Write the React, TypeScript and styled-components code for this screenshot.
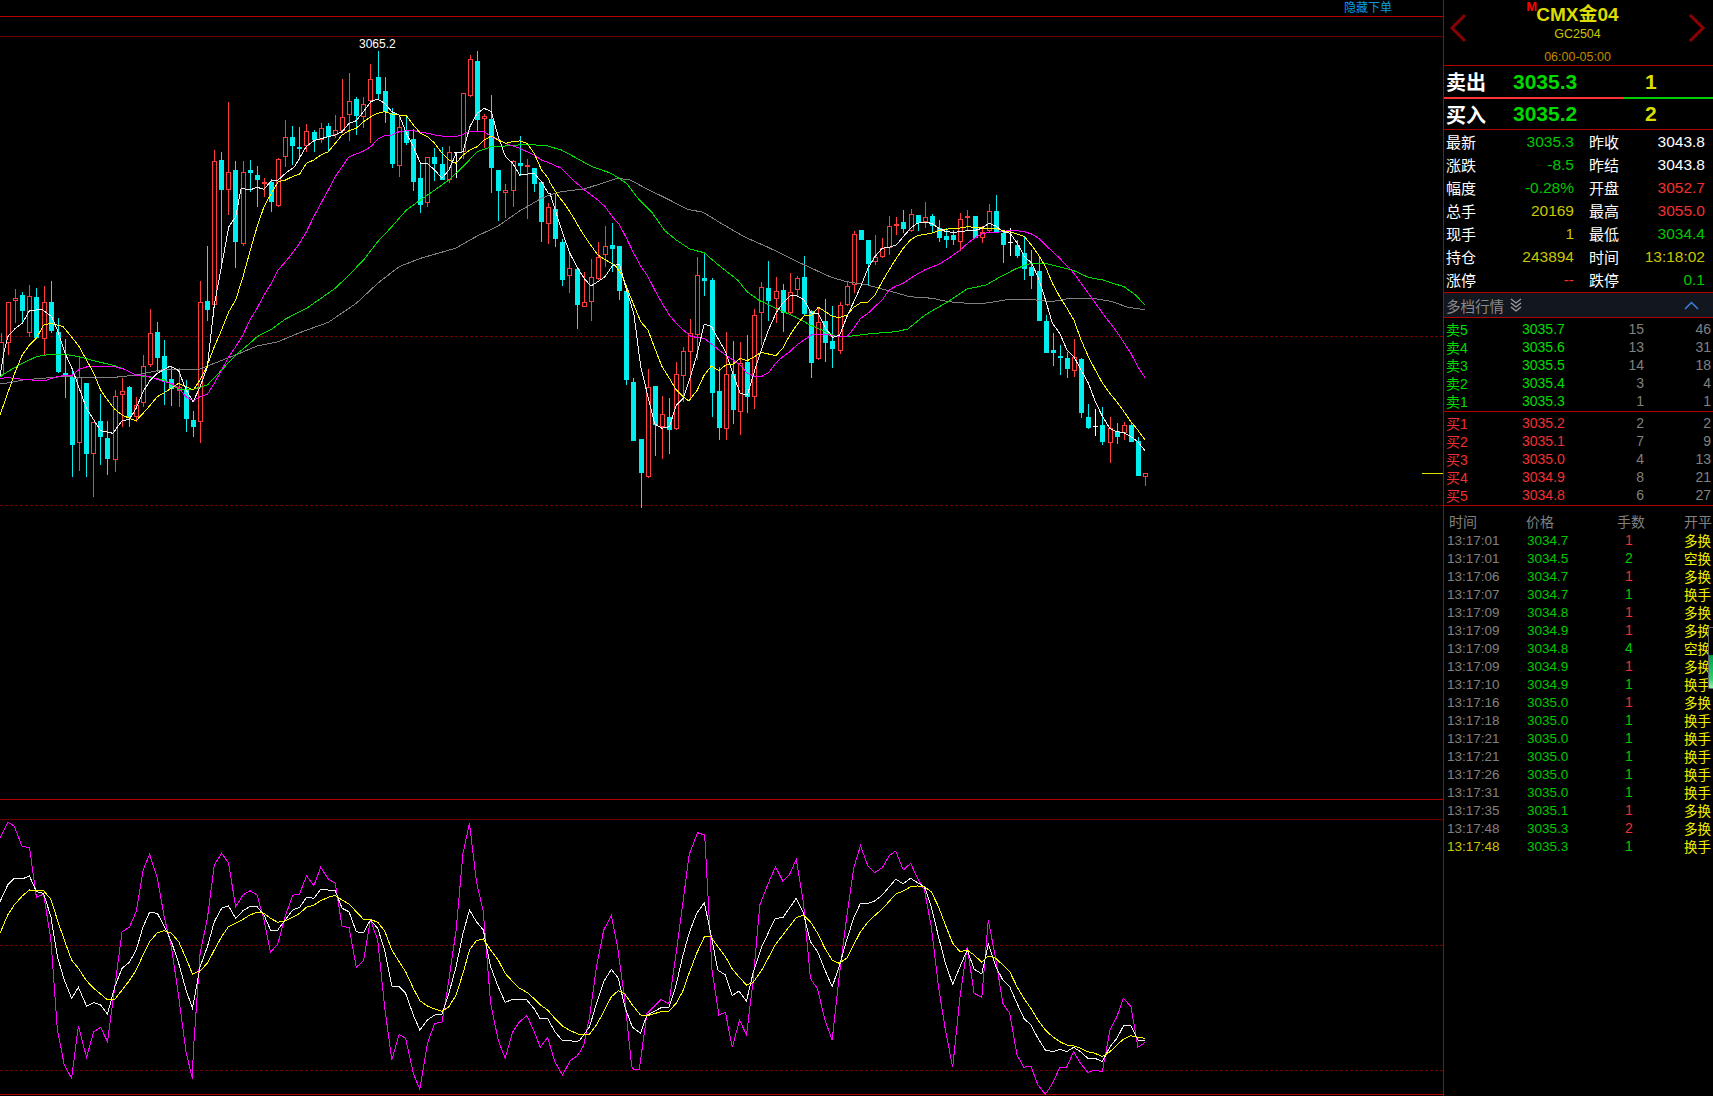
import React from 'react';
import styled, { createGlobalStyle } from 'styled-components';

type Pt = [number, number];
type Candle = ['r' | 'c' | 'w', number, number, number, number];

const SCALE_X = 1568 / 600;

const GlobalStyle = createGlobalStyle`
  html, body {
    margin: 0;
    padding: 0;
    background: #000;
    overflow: hidden;
  }
  body {
    font-family: "Liberation Sans", "Noto Sans CJK SC", sans-serif;
  }
`;

// candle tables: kind, high, body top, body bottom, low (y is read off at 3x)
const candlesLeft: Candle[] = [
  ['r', 1000, 1027, 1125, 1130], ['r', 907, 907, 1028, 1065], ['r', 868, 895, 903, 968], ['c', 877, 885, 933, 968],
  ['r', 855, 889, 1000, 1010], ['c', 865, 891, 1015, 1018], ['r', 858, 907, 1018, 1065], ['c', 843, 907, 992, 1000],
  ['c', 955, 996, 1116, 1120], ['c', 1018, 1120, 1128, 1195], ['c', 1110, 1130, 1334, 1432], ['r', 1072, 1130, 1330, 1412],
  ['c', 1150, 1150, 1362, 1432], ['r', 1267, 1267, 1363, 1492], ['c', 1183, 1263, 1310, 1395], ['c', 1263, 1315, 1377, 1424],
  ['r', 1170, 1187, 1381, 1415], ['r', 1135, 1172, 1186, 1280], ['c', 1158, 1162, 1252, 1280], ['r', 1190, 1216, 1250, 1265],
  ['r', 1065, 1099, 1208, 1220], ['r', 928, 1000, 1095, 1100], ['c', 967, 997, 1073, 1115], ['c', 1020, 1068, 1143, 1215],
  ['c', 1100, 1138, 1168, 1218], ['r', 1105, 1160, 1172, 1220], ['c', 1140, 1170, 1258, 1295], ['c', 1232, 1260, 1280, 1312],
  ['r', 843, 905, 1267, 1328], ['c', 738, 903, 930, 963], ['r', 450, 484, 915, 920], ['c', 455, 480, 570, 790],
  ['r', 307, 515, 570, 645], ['c', 483, 510, 726, 805], ['r', 483, 515, 733, 738], ['c', 480, 510, 518, 575],
  ['c', 498, 525, 540, 620], ['r', 535, 545, 552, 590], ['c', 537, 547, 605, 635], ['r', 475, 478, 617, 620],
  ['r', 360, 412, 472, 500], ['c', 378, 411, 438, 495], ['c', 382, 441, 445, 480], ['r', 372, 392, 438, 455],
  ['c', 390, 396, 420, 457], ['r', 368, 383, 420, 430], ['c', 368, 378, 410, 455], ['r', 345, 391, 405, 415],
  ['r', 238, 350, 392, 400], ['r', 220, 302, 344, 422], ['c', 290, 297, 347, 405], ['r', 290, 311, 352, 385],
  ['r', 192, 238, 302, 428], ['c', 153, 231, 282, 300], ['c', 232, 273, 335, 368], ['c', 325, 338, 491, 505],
  ['r', 348, 382, 497, 530], ['c', 348, 390, 428, 435], ['c', 388, 418, 545, 572], ['c', 490, 534, 616, 640],
  ['r', 470, 472, 610, 620], ['c', 443, 470, 491, 542], ['c', 440, 492, 540, 540], ['r', 438, 457, 540, 548],
  ['w', 455, 457, 457, 535], ['r', 278, 280, 455, 478], ['r', 165, 178, 288, 292], ['c', 153, 183, 360, 392],
  ['r', 342, 348, 356, 445], ['c', 285, 358, 503, 578], ['c', 510, 510, 572, 662], ['r', 552, 571, 578, 655],
  ['r', 480, 484, 572, 622], ['c', 408, 489, 497, 528], ['r', 478, 496, 500, 657], ['c', 504, 504, 552, 575],
  ['c', 545, 547, 665, 725], ['r', 610, 622, 671, 733],
];

// read off a crop that starts 100px lower, so these get shifted when drawn
const candlesRight: Candle[] = [
  ['c', 280, 326, 417, 440], ['c', 418, 426, 540, 557], ['r', 452, 505, 527, 578], ['c', 500, 507, 615, 688],
  ['r', 515, 605, 620, 622], ['r', 478, 532, 605, 662], ['r', 427, 472, 536, 540], ['r', 377, 438, 465, 500],
  ['c', 370, 435, 446, 515], ['c', 438, 438, 573, 600], ['c', 570, 573, 840, 855], ['c', 835, 847, 1022, 1022],
  ['c', 1017, 1017, 1118, 1225], ['r', 808, 862, 1130, 1133], ['c', 858, 858, 975, 1068], ['r', 888, 943, 982, 1076],
  ['c', 893, 950, 990, 1062], ['r', 787, 823, 986, 990], ['r', 742, 754, 827, 905], ['r', 657, 700, 755, 900],
  ['r', 472, 526, 705, 780], ['c', 455, 534, 542, 588], ['c', 535, 540, 878, 950], ['c', 800, 873, 984, 1020],
  ['r', 697, 823, 988, 1020], ['c', 723, 822, 930, 972], ['r', 725, 790, 935, 1005], ['c', 705, 786, 890, 938],
  ['r', 628, 645, 892, 928], ['r', 545, 560, 640, 735], ['c', 483, 563, 603, 662], ['r', 530, 574, 598, 668],
  ['c', 552, 570, 640, 695], ['r', 520, 577, 638, 645], ['r', 527, 535, 570, 590], ['c', 468, 531, 642, 645],
  ['c', 630, 633, 788, 835], ['r', 620, 667, 776, 780], ['c', 598, 663, 728, 785], ['c', 617, 723, 747, 803],
  ['r', 607, 615, 754, 763], ['r', 545, 559, 616, 618], ['r', 392, 403, 555, 578], ['c', 390, 390, 420, 420],
  ['c', 420, 420, 491, 555], ['r', 405, 472, 487, 495], ['r', 415, 445, 472, 475], ['r', 348, 378, 445, 465],
  ['r', 350, 373, 379, 405], ['c', 330, 366, 386, 400], ['r', 328, 343, 393, 395], ['c', 345, 345, 370, 393],
  ['r', 307, 352, 367, 385], ['c', 342, 348, 378, 395], ['c', 360, 384, 413, 425], ['c', 385, 407, 419, 443],
  ['c', 390, 405, 420, 435], ['r', 340, 358, 425, 452], ['r', 330, 349, 353, 390], ['c', 348, 348, 413, 413],
  ['r', 378, 395, 413, 428], ['r', 312, 332, 392, 395], ['c', 285, 333, 395, 395], ['c', 395, 398, 435, 488],
  ['w', 385, 425, 425, 468], ['c', 420, 435, 468, 475], ['c', 410, 459, 507, 540], ['c', 450, 501, 528, 568],
  ['c', 470, 513, 663, 663], ['c', 645, 663, 758, 758], ['c', 700, 750, 758, 797], ['c', 735, 768, 773, 825],
  ['c', 755, 774, 806, 835], ['r', 716, 772, 812, 830], ['c', 775, 777, 938, 955], ['c', 912, 952, 985, 988],
  ['w', 928, 978, 978, 1008], ['c', 922, 976, 1025, 1035], ['r', 950, 985, 1028, 1090], ['c', 968, 994, 1010, 1033],
  ['r', 965, 976, 998, 1020], ['c', 965, 975, 1025, 1025], ['c', 1010, 1023, 1127, 1127], ['r', 1120, 1120, 1130, 1158],
];

const whiteA: Pt[] = [[0, 1128], [10, 1060], [20, 1010], [40, 985], [58, 970], [77, 932], [110, 928], [135, 950], [150, 990], [170, 1060], [190, 1110], [207, 1165], [226, 1225], [263, 1292], [295, 1300], [319, 1262], [338, 1258], [356, 1225], [374, 1175], [393, 1140], [411, 1120], [445, 1098], [467, 1112], [486, 1170], [505, 1205], [523, 1160], [542, 1100], [560, 915], [598, 680], [616, 650], [630, 565], [653, 570], [672, 562], [690, 568], [709, 542], [727, 540], [746, 520], [770, 500], [800, 440], [820, 422], [858, 410], [876, 405], [894, 395], [912, 370], [931, 362], [950, 335], [969, 305], [987, 297], [1005, 310], [1024, 335], [1043, 345], [1062, 400], [1080, 440], [1099, 490], [1118, 492], [1136, 510], [1155, 535], [1173, 510], [1192, 460], [1210, 455], [1228, 380], [1247, 340], [1265, 325], [1284, 335], [1302, 410], [1321, 470], [1340, 490], [1358, 525], [1396, 520], [1415, 545], [1433, 580]];
const whiteB: Pt[] = [[0, 280], [33, 400], [52, 460], [70, 500], [89, 535], [107, 558], [125, 545], [144, 530], [163, 497], [182, 493], [200, 570], [219, 640], [237, 800], [256, 890], [274, 972], [293, 985], [312, 980], [330, 915], [348, 895], [367, 830], [385, 760], [403, 672], [422, 680], [441, 720], [459, 755], [478, 820], [497, 880], [516, 885], [534, 815], [552, 750], [571, 690], [590, 640], [608, 610], [627, 588], [645, 587], [664, 600], [683, 640], [701, 640], [720, 685], [739, 712], [757, 705], [776, 650], [794, 605], [812, 560], [831, 505], [849, 470], [868, 445], [886, 442], [905, 435], [923, 410], [942, 385], [960, 370], [979, 367], [997, 370], [1016, 385], [1035, 395], [1054, 397], [1072, 395], [1091, 392], [1109, 392], [1128, 385], [1147, 370], [1165, 378], [1184, 395], [1203, 400], [1221, 430], [1240, 470], [1258, 488], [1277, 535], [1295, 600], [1313, 670], [1332, 700], [1351, 750], [1369, 770], [1388, 810], [1407, 850], [1425, 905], [1444, 950], [1463, 985], [1481, 995], [1500, 998], [1518, 1010], [1536, 1025], [1555, 1052]];

const yellowA: Pt[] = [[0, 1245], [20, 1180], [40, 1115], [58, 1065], [77, 1035], [95, 1015], [114, 975], [133, 970], [165, 980], [190, 1015], [207, 1040], [226, 1080], [245, 1120], [263, 1170], [281, 1200], [300, 1228], [319, 1245], [338, 1255], [356, 1262], [374, 1240], [393, 1215], [411, 1190], [429, 1178], [448, 1165], [467, 1150], [486, 1160], [505, 1170], [523, 1140], [542, 1095], [560, 1040], [579, 990], [598, 935], [616, 900], [635, 830], [653, 755], [672, 680], [690, 620], [709, 580], [727, 545], [746, 540], [764, 530], [783, 522], [801, 490], [820, 480], [839, 465], [858, 455], [876, 430], [894, 405], [912, 392], [931, 385], [950, 365], [969, 350], [987, 340], [1005, 335], [1024, 342], [1043, 345], [1062, 347], [1080, 375], [1099, 400], [1118, 410], [1136, 430], [1155, 460], [1173, 480], [1192, 490], [1210, 465], [1228, 450], [1247, 440], [1265, 420], [1284, 408], [1302, 420], [1321, 430], [1340, 425], [1358, 423], [1377, 430], [1396, 460], [1415, 510], [1433, 535]];
const yellowB: Pt[] = [[0, 248], [20, 285], [40, 315], [60, 350], [80, 390], [100, 425], [125, 465], [150, 483], [170, 495], [190, 530], [210, 590], [237, 665], [256, 690], [274, 745], [293, 800], [312, 835], [330, 870], [348, 890], [363, 903], [385, 870], [403, 825], [422, 798], [441, 812], [459, 795], [478, 793], [497, 775], [516, 782], [534, 770], [552, 757], [571, 762], [590, 767], [608, 745], [627, 705], [645, 675], [664, 647], [683, 647], [701, 622], [720, 635], [739, 650], [757, 652], [776, 645], [794, 622], [812, 608], [831, 606], [849, 585], [868, 545], [886, 510], [905, 475], [923, 445], [942, 420], [960, 407], [979, 403], [997, 400], [1016, 392], [1035, 388], [1054, 385], [1072, 384], [1091, 380], [1109, 382], [1128, 384], [1147, 385], [1165, 385], [1184, 392], [1203, 395], [1221, 402], [1240, 410], [1258, 435], [1277, 465], [1295, 500], [1313, 550], [1332, 590], [1351, 625], [1369, 660], [1388, 720], [1407, 770], [1425, 810], [1444, 850], [1463, 880], [1481, 905], [1500, 935], [1518, 965], [1536, 990], [1555, 1020]];

const magentaA: Pt[] = [[0, 1135], [20, 1133], [60, 1138], [95, 1141], [120, 1141], [150, 1130], [175, 1125], [190, 1125], [207, 1108], [226, 1101], [263, 1100], [300, 1100], [330, 1110], [356, 1125], [393, 1130], [411, 1138], [429, 1145], [448, 1150], [467, 1165], [486, 1190], [505, 1202], [523, 1190], [542, 1183], [560, 1150], [579, 1110], [598, 1070], [616, 1040], [635, 1005], [653, 960], [672, 925], [690, 885], [709, 850], [727, 810], [746, 785], [764, 760], [783, 730], [801, 695], [820, 650], [839, 610], [858, 570], [876, 530], [894, 500], [912, 470], [931, 462], [950, 453], [969, 440], [987, 418], [1005, 407], [1024, 405], [1043, 395], [1062, 392], [1080, 392], [1099, 397], [1118, 400], [1136, 405], [1155, 408], [1173, 410], [1192, 410], [1210, 403], [1228, 395], [1265, 395], [1284, 410], [1321, 430], [1358, 445], [1396, 465], [1415, 480]];
const magentaB: Pt[] = [[0, 190], [30, 205], [60, 240], [90, 270], [125, 300], [144, 320], [163, 350], [182, 375], [200, 415], [219, 460], [237, 498], [256, 530], [274, 570], [293, 610], [312, 645], [330, 670], [348, 690], [367, 708], [385, 713], [403, 715], [422, 732], [441, 750], [459, 765], [478, 780], [497, 795], [516, 820], [534, 830], [552, 830], [571, 818], [590, 790], [608, 770], [627, 755], [645, 735], [664, 720], [683, 705], [701, 702], [720, 702], [739, 708], [776, 710], [794, 685], [812, 655], [831, 640], [849, 620], [868, 600], [886, 570], [905, 558], [923, 550], [942, 535], [960, 522], [979, 510], [1016, 493], [1035, 480], [1054, 465], [1072, 450], [1091, 430], [1109, 415], [1128, 402], [1147, 397], [1165, 397], [1184, 395], [1203, 390], [1240, 395], [1258, 402], [1277, 415], [1295, 435], [1332, 475], [1369, 520], [1388, 550], [1407, 580], [1444, 640], [1481, 695], [1518, 760], [1536, 800], [1555, 833]];

const greenA: Pt[] = [[0, 1130], [20, 1115], [58, 1090], [95, 1070], [130, 1063], [170, 1063], [207, 1070], [245, 1082], [300, 1097], [330, 1110], [356, 1125], [393, 1132], [430, 1140], [467, 1168], [505, 1168], [542, 1155], [579, 1110], [616, 1065], [653, 1030], [672, 1010], [709, 988], [746, 957], [801, 925], [839, 895], [876, 865], [912, 825], [950, 780], [987, 725], [1024, 680], [1062, 630], [1099, 600], [1136, 570], [1173, 540], [1210, 500], [1247, 455], [1284, 440], [1321, 438], [1377, 433], [1433, 438]];
const greenB: Pt[] = [[0, 140], [30, 150], [70, 175], [110, 200], [160, 220], [200, 250], [230, 295], [265, 335], [300, 392], [330, 420], [365, 447], [403, 458], [440, 495], [490, 540], [515, 575], [545, 600], [590, 625], [640, 650], [680, 675], [720, 695], [745, 708], [776, 710], [830, 702], [870, 698], [905, 695], [935, 687], [980, 645], [1040, 605], [1090, 567], [1140, 555], [1170, 535], [1220, 505], [1258, 490], [1295, 490], [1365, 510], [1407, 532], [1444, 540], [1500, 560], [1530, 585], [1555, 615]];

const grayA: Pt[] = [[0, 1152], [30, 1147], [60, 1140], [110, 1135], [160, 1130], [220, 1132], [300, 1132], [356, 1125], [420, 1110], [523, 1107], [560, 1090], [616, 1065], [672, 1038], [727, 1025], [783, 998], [858, 967], [893, 940], [931, 910], [987, 850], [1043, 800], [1099, 775], [1190, 745], [1247, 708], [1302, 678], [1358, 633], [1415, 595]];
const grayB: Pt[] = [[0, 285], [20, 277], [50, 272], [90, 267], [130, 252], [175, 235], [210, 240], [250, 265], [295, 290], [360, 328], [400, 337], [450, 372], [510, 412], [570, 442], [665, 495], [735, 532], [776, 545], [830, 555], [885, 572], [940, 590], [1000, 595], [1040, 605], [1090, 610], [1135, 610], [1190, 600], [1255, 598], [1310, 605], [1360, 595], [1420, 595], [1470, 605], [1510, 622], [1555, 629]];

const kMagentaA: Pt[] = [[0, 145], [20, 97], [37, 108], [58, 170], [77, 172], [95, 322], [114, 312], [133, 450], [150, 720], [168, 825], [187, 865], [205, 707], [226, 802], [245, 725], [263, 712], [281, 755], [300, 590], [319, 425], [338, 412], [356, 365], [374, 240], [391, 193], [411, 265], [430, 385], [448, 470], [467, 620], [486, 785], [503, 868], [505, 790], [523, 490], [542, 385], [560, 225], [579, 190], [597, 218], [616, 350], [635, 315], [653, 302], [672, 315], [690, 390], [707, 487], [726, 462], [745, 380], [765, 316], [783, 312], [801, 257], [820, 287], [838, 232], [858, 267], [876, 280], [894, 410], [912, 412], [931, 532], [950, 512], [968, 390], [987, 450], [1005, 650], [1024, 810], [1043, 733], [1060, 745], [1080, 850], [1097, 898], [1117, 760], [1136, 700], [1155, 697], [1173, 570], [1192, 420], [1210, 190], [1227, 100], [1245, 275], [1263, 365], [1282, 640], [1302, 750], [1320, 805], [1340, 725], [1358, 695], [1377, 677], [1395, 722], [1412, 772], [1431, 742], [1450, 815], [1470, 855], [1490, 812], [1508, 798]];
const kMagentaB: Pt[] = [[0, 785], [10, 765], [25, 680], [43, 530], [62, 420], [82, 377], [98, 470], [117, 630], [135, 830], [142, 840], [155, 838], [175, 670], [193, 650], [212, 628], [232, 642], [250, 500], [268, 345], [285, 195], [307, 128], [326, 135], [345, 540], [363, 675], [380, 667], [398, 772], [417, 690], [435, 735], [452, 575], [470, 345], [492, 280], [511, 230], [530, 273], [548, 253], [565, 208], [584, 340], [602, 565], [621, 597], [640, 690], [659, 750], [677, 560], [695, 400], [715, 235], [733, 167], [752, 227], [770, 248], [790, 233], [808, 197], [825, 183], [845, 240], [864, 220], [882, 265], [900, 300], [918, 410], [937, 590], [955, 720], [974, 832], [993, 620], [1012, 470], [1030, 610], [1050, 622], [1067, 390], [1087, 510], [1105, 640], [1123, 670], [1142, 795], [1160, 832], [1178, 828], [1197, 885], [1216, 913], [1235, 880], [1254, 832], [1272, 832], [1290, 785], [1308, 820], [1327, 847], [1346, 840], [1365, 845], [1385, 720], [1403, 680], [1420, 625], [1440, 650], [1458, 772], [1477, 757]];

const kWhiteA: Pt[] = [[0, 335], [20, 285], [37, 265], [58, 267], [77, 258], [95, 305], [114, 310], [133, 380], [150, 500], [168, 570], [187, 625], [205, 592], [226, 648], [245, 638], [263, 645], [281, 672], [300, 590], [319, 535], [338, 517], [356, 480], [374, 410], [391, 367], [411, 370], [430, 410], [448, 455], [467, 520], [486, 600], [503, 655], [523, 530], [542, 470], [560, 395], [579, 355], [597, 347], [616, 385], [635, 362], [653, 350], [672, 350], [690, 375], [707, 420], [726, 420], [745, 390], [765, 360], [783, 352], [801, 322], [820, 325], [838, 298], [858, 300], [876, 302], [894, 355], [912, 365], [931, 425], [950, 428], [968, 390], [987, 415], [1005, 480], [1024, 588], [1043, 590], [1060, 610], [1080, 675], [1097, 720], [1117, 690], [1136, 675], [1155, 672], [1173, 610], [1192, 530], [1210, 430], [1227, 360], [1245, 395], [1263, 420], [1282, 530], [1302, 590], [1320, 637], [1340, 628], [1377, 630], [1395, 655], [1412, 687], [1431, 685], [1450, 725], [1470, 752], [1490, 752], [1508, 755]];
const kWhiteB: Pt[] = [[0, 750], [25, 710], [43, 640], [62, 575], [82, 538], [100, 565], [117, 650], [137, 712], [158, 730], [175, 675], [212, 653], [232, 653], [250, 590], [268, 500], [285, 430], [305, 370], [325, 338], [345, 450], [360, 540], [380, 555], [398, 617], [415, 603], [435, 633], [452, 550], [475, 470], [510, 385], [530, 383], [565, 325], [584, 370], [602, 455], [621, 485], [640, 540], [659, 590], [677, 530], [697, 450], [715, 385], [733, 340], [752, 340], [770, 333], [790, 315], [825, 268], [845, 281], [864, 265], [882, 278], [900, 290], [918, 350], [937, 440], [955, 520], [974, 583], [993, 530], [1012, 480], [1030, 537], [1050, 552], [1067, 462], [1087, 530], [1105, 570], [1123, 590], [1142, 640], [1160, 685], [1178, 705], [1197, 745], [1216, 780], [1235, 785], [1254, 778], [1272, 785], [1290, 772], [1308, 785], [1327, 805], [1346, 805], [1365, 815], [1385, 770], [1403, 745], [1420, 708], [1440, 707], [1458, 750], [1477, 750]];

const kYellowA: Pt[] = [[0, 430], [20, 375], [37, 345], [58, 318], [77, 300], [114, 302], [133, 328], [150, 390], [168, 450], [187, 510], [205, 535], [226, 572], [245, 595], [263, 612], [281, 630], [300, 628], [319, 600], [338, 572], [356, 540], [374, 495], [391, 455], [411, 428], [430, 422], [448, 430], [467, 455], [486, 505], [503, 552], [523, 542], [542, 520], [560, 480], [579, 440], [597, 410], [616, 400], [635, 388], [653, 375], [672, 367], [690, 370], [707, 385], [726, 397], [745, 392], [765, 382], [783, 370], [801, 352], [820, 345], [838, 332], [858, 322], [876, 316], [894, 330], [912, 342], [931, 365], [950, 388], [968, 388], [987, 397], [1005, 422], [1024, 480], [1043, 515], [1060, 545], [1080, 595], [1097, 632], [1117, 648], [1136, 657], [1155, 664], [1173, 650], [1192, 615], [1210, 550], [1227, 480], [1245, 452], [1263, 447], [1282, 480], [1302, 510], [1320, 550], [1340, 575], [1358, 595], [1377, 607], [1395, 625], [1412, 645], [1431, 660], [1450, 685], [1470, 708], [1490, 722], [1508, 730]];
const kYellowB: Pt[] = [[0, 735], [25, 732], [43, 705], [62, 665], [82, 620], [100, 602], [117, 612], [137, 645], [158, 675], [175, 677], [212, 665], [232, 663], [250, 642], [268, 605], [285, 550], [305, 490], [325, 440], [342, 440], [360, 470], [380, 500], [398, 537], [415, 560], [435, 585], [452, 578], [475, 540], [510, 465], [530, 435], [565, 383], [584, 375], [602, 395], [621, 430], [640, 475], [659, 510], [677, 520], [697, 505], [715, 465], [733, 425], [752, 397], [770, 377], [790, 357], [825, 312], [845, 303], [864, 290], [882, 288], [900, 290], [918, 305], [937, 350], [955, 405], [974, 460], [993, 485], [1012, 480], [1030, 495], [1050, 517], [1067, 498], [1087, 505], [1105, 525], [1123, 545], [1142, 590], [1160, 625], [1178, 655], [1197, 690], [1216, 720], [1235, 740], [1254, 755], [1272, 765], [1290, 767], [1308, 775], [1327, 785], [1346, 790], [1365, 800], [1385, 785], [1403, 765], [1420, 748], [1440, 737], [1458, 742], [1477, 745]];

// two read-offs per line: [x origin, y origin] for each half
const toPoints = (a: Pt[], b: Pt[], ax: number, ay: number, bx: number, by: number) =>
  [
    ...a.map(([x, y]) => `${(ax + x / SCALE_X).toFixed(1)},${(ay + y / 3).toFixed(1)}`),
    ...b.map(([x, y]) => `${(bx + x / SCALE_X).toFixed(1)},${(by + y / 3).toFixed(1)}`),
  ].join(' ');

const mainLine = (a: Pt[], b: Pt[]) => toPoints(a, b, 0, 0, 550, 100);
const subLine = (a: Pt[], b: Pt[]) => toPoints(a, b, 0, 790, 580, 790);

const Root = styled.div`
  display: flex;
  width: 1713px;
  height: 1096px;
  background: #000;
  overflow: hidden;
`;

const ChartColumn = styled.div`
  width: 1443px;
  display: flex;
  flex-direction: column;
`;

const TopBar = styled.div`
  height: 16px;
  border-bottom: 1px solid #b80000;
  display: flex;
  justify-content: flex-end;
  align-items: center;
  padding-right: 51px;
`;

const HideOrder = styled.span`
  font-size: 12px;
  line-height: 14px;
  color: #0a9be0;
`;

const MainPane = styled.div`
  height: 782px;
  border-bottom: 1px solid #b00000;
`;

const SubPane = styled.div`
  height: 296px;
`;

const ChartSvg = styled.svg`
  display: block;
  shape-rendering: crispEdges;
`;

const PriceTag = styled.text`
  font-family: "Liberation Sans", sans-serif;
  font-size: 12px;
  fill: #fff;
`;

const Panel = styled.aside`
  position: relative;
  width: 269px;
  border-left: 1px solid #b00000;
  display: flex;
  flex-direction: column;
`;

const Header = styled.header`
  height: 66px;
  box-sizing: border-box;
  border-bottom: 1px solid #b00000;
  display: flex;
  justify-content: space-between;
  align-items: flex-start;
  padding: 13px 7px 0 5px;
`;

const NavArrow = styled.svg`
  display: block;
  width: 18px;
  height: 30px;
`;

const TitleBlock = styled.div`
  margin-top: -13px;
  display: flex;
  flex-direction: column;
  align-items: center;
`;

const Title = styled.div`
  position: relative;
  font-size: 19px;
  line-height: 22px;
  margin-top: 4px;
  font-weight: bold;
  color: #dcdc00;
`;

const Marker = styled.span`
  position: absolute;
  left: -10px;
  top: -4px;
  font-size: 13px;
  line-height: 14px;
  color: #f00;
`;

const Symbol = styled.div`
  font-size: 12.5px;
  line-height: 14px;
  margin-top: 1px;
  color: #c8c800;
`;

const Session = styled.div`
  font-size: 12.5px;
  line-height: 14px;
  margin-top: 9px;
  color: #c08800;
`;

const QuoteRow = styled.div<{ $height: number }>`
  height: ${({ $height }) => $height}px;
  display: grid;
  grid-template-columns: 67px 132px 1fr;
  align-items: center;
  padding-left: 2px;
  font-weight: bold;
`;

const QuoteLabel = styled.span`
  font-size: 20px;
  color: #fff;
`;

const QuotePrice = styled.span`
  font-size: 21px;
  color: #00d800;
`;

const QuoteSize = styled.span`
  font-size: 21px;
  color: #dcdc00;
`;

const PressureBar = styled.div`
  display: flex;
  height: 2px;
`;

const PressureFill = styled.div<{ $color: string; $share: number }>`
  width: ${({ $share }) => $share}%;
  background: ${({ $color }) => $color};
`;

const Stats = styled.div`
  height: 162px;
  border-top: 1px solid #b00000;
  border-bottom: 1px solid #b00000;
`;

const StatRow = styled.div`
  height: 23px;
  display: grid;
  grid-template-columns: 36px 92px 51px 80px;
  align-items: center;
  padding-left: 2px;
  font-size: 15.5px;
`;

const StatLabel = styled.span`
  font-size: 15px;
  color: #fff;
`;

const StatLabelRight = styled(StatLabel)`
  padding-left: 15px;
`;

const StatValue = styled.span<{ $color: string }>`
  text-align: right;
  white-space: nowrap;
  color: ${({ $color }) => $color};
`;

const DepthHead = styled.div`
  height: 24px;
  background: #12161e;
  border-bottom: 1px solid #b00000;
  display: flex;
  align-items: center;
  padding: 0 14px 0 2px;
  color: #8a8a8a;
  font-size: 14.5px;
`;

const DepthTitle = styled.span`
  margin-right: 6px;
`;

const HeadIcon = styled.svg`
  display: block;
`;

const HeadUp = styled(HeadIcon)`
  margin-left: auto;
`;

const DepthBlock = styled.div`
  padding: 1px 0 2px;
  border-bottom: 1px solid #b00000;
`;

const DepthRow = styled.div<{ $color: string }>`
  height: 18px;
  display: grid;
  grid-template-columns: 76px 62px 60px 67px;
  align-items: center;
  padding-left: 2px;
  font-size: 14px;
  color: ${({ $color }) => $color};
`;

const DepthVolume = styled.span`
  text-align: right;
  color: #808080;
`;

const Trades = styled.div`
  padding-top: 5px;
`;

const TradeHead = styled.div`
  height: 19px;
  display: grid;
  grid-template-columns: 77px 91px 67px 1fr;
  align-items: center;
  padding-left: 5px;
  font-size: 14px;
  color: #808080;
`;

const TradeRow = styled.div`
  height: 18px;
  display: grid;
  grid-template-columns: 80px 82px 40px 1fr;
  align-items: center;
  padding-left: 3px;
  font-size: 13.5px;
`;

const TradeTime = styled.span<{ $latest: boolean }>`
  color: ${({ $latest }) => ($latest ? '#c8c800' : '#808080')};
`;

const TradePrice = styled.span`
  color: #00c800;
`;

const TradeQty = styled.span<{ $color: string }>`
  text-align: center;
  font-size: 14px;
  color: ${({ $color }) => $color};
`;

const TradeSide = styled.span`
  padding-left: 35px;
  white-space: nowrap;
  color: #f0f000;
`;

const ScrollMark = styled.div`
  position: absolute;
  right: 0;
  top: 627px;
  width: 4px;
  height: 60px;
  border: 1px solid #666;
  border-right: none;
  border-radius: 2px 0 0 2px;
  background: linear-gradient(#000 44%, #00a050 46%, #30d070 85%, #a0f0b0);
`;

const RED = '#f03030';
const GREEN = '#00c800';
const YELLOW = '#c8c800';

const stats: [string, string, string, string, string, string][] = [
  ['最新', '3035.3', GREEN, '昨收', '3043.8', '#fff'],
  ['涨跌', '-8.5', GREEN, '昨结', '3043.8', '#fff'],
  ['幅度', '-0.28%', GREEN, '开盘', '3052.7', RED],
  ['总手', '20169', YELLOW, '最高', '3055.0', RED],
  ['现手', '1', YELLOW, '最低', '3034.4', GREEN],
  ['持仓', '243894', YELLOW, '时间', '13:18:02', YELLOW],
  ['涨停', '--', RED, '跌停', '0.1', GREEN],
];

const asks = [
  ['卖5', '3035.7', '15', '46'],
  ['卖4', '3035.6', '13', '31'],
  ['卖3', '3035.5', '14', '18'],
  ['卖2', '3035.4', '3', '4'],
  ['卖1', '3035.3', '1', '1'],
];

const bids = [
  ['买1', '3035.2', '2', '2'],
  ['买2', '3035.1', '7', '9'],
  ['买3', '3035.0', '4', '13'],
  ['买4', '3034.9', '8', '21'],
  ['买5', '3034.8', '6', '27'],
];

const trades: [string, string, string, boolean, string][] = [
  ['13:17:01', '3034.7', '1', true, '多换'],
  ['13:17:01', '3034.5', '2', false, '空换'],
  ['13:17:06', '3034.7', '1', true, '多换'],
  ['13:17:07', '3034.7', '1', false, '换手'],
  ['13:17:09', '3034.8', '1', true, '多换'],
  ['13:17:09', '3034.9', '1', true, '多换'],
  ['13:17:09', '3034.8', '4', false, '空换'],
  ['13:17:09', '3034.9', '1', true, '多换'],
  ['13:17:10', '3034.9', '1', false, '换手'],
  ['13:17:16', '3035.0', '1', true, '多换'],
  ['13:17:18', '3035.0', '1', false, '换手'],
  ['13:17:21', '3035.0', '1', false, '换手'],
  ['13:17:21', '3035.0', '1', false, '换手'],
  ['13:17:26', '3035.0', '1', false, '换手'],
  ['13:17:31', '3035.0', '1', false, '换手'],
  ['13:17:35', '3035.1', '1', true, '多换'],
  ['13:17:48', '3035.3', '2', true, '多换'],
  ['13:17:48', '3035.3', '1', false, '换手'],
];

const CANDLE_RED = '#ff3c3c';
const CANDLE_CYAN = '#00eeee';

function CandleMark({ candle, index }: { candle: Candle; index: number }) {
  const [kind, hi, top, bot, lo] = candle;
  const x = Math.round(8 + index * 7.107);
  const yHi = Math.round(hi / 3);
  const yTop = Math.round(top / 3);
  const yBot = Math.round(bot / 3);
  const yLo = Math.round(lo / 3);
  if (kind === 'w') {
    return (
      <g stroke="#fff">
        <line x1={x + 0.5} x2={x + 0.5} y1={yHi} y2={yLo} />
        <line x1={x - 2} x2={x + 3} y1={yTop + 0.5} y2={yTop + 0.5} />
      </g>
    );
  }
  if (kind === 'c') {
    return (
      <g>
        <line x1={x + 0.5} x2={x + 0.5} y1={yHi} y2={yLo} stroke={CANDLE_CYAN} />
        <rect x={x - 2} y={yTop} width={5} height={Math.max(yBot - yTop, 2)} fill={CANDLE_CYAN} />
      </g>
    );
  }
  return (
    <g stroke={CANDLE_RED}>
      <line x1={x + 0.5} x2={x + 0.5} y1={yHi} y2={yTop} />
      <line x1={x + 0.5} x2={x + 0.5} y1={yBot} y2={yLo} />
      <rect x={x - 1.5} y={yTop + 0.5} width={4} height={Math.max(yBot - yTop - 1, 1)} fill="#000" />
    </g>
  );
}

function HLine({ y, color, dashed }: { y: number; color: string; dashed?: boolean }) {
  return (
    <line
      x1={0}
      x2={1443}
      y1={y + 0.5}
      y2={y + 0.5}
      stroke={color}
      strokeDasharray={dashed ? '3 2' : undefined}
    />
  );
}

function MainChart() {
  const shifted = candlesRight.map(
    ([kind, hi, top, bot, lo]): Candle => [kind, hi + 300, top + 300, bot + 300, lo + 300],
  );
  const candles = [...candlesLeft, ...shifted];
  return (
    <ChartSvg width={1443} height={782} viewBox="0 17 1443 782">
      <HLine y={36} color="#700000" />
      <HLine y={336} color="#700000" dashed />
      <HLine y={505} color="#700000" dashed />
      {candles.map((c, i) => (
        <CandleMark key={i} candle={c} index={i - 1} />
      ))}
      <polyline points={mainLine(grayA, grayB)} fill="none" stroke="#808080" />
      <polyline points={mainLine(greenA, greenB)} fill="none" stroke="#00e000" />
      <polyline points={mainLine(magentaA, magentaB)} fill="none" stroke="#ff00ff" />
      <polyline points={mainLine(yellowA, yellowB)} fill="none" stroke="#ffff00" />
      <polyline points={mainLine(whiteA, whiteB)} fill="none" stroke="#f0f0f0" />
      <line x1={1422} x2={1443} y1={473.5} y2={473.5} stroke="#e0e000" />
      <PriceTag x={359} y={48}>3065.2</PriceTag>
    </ChartSvg>
  );
}

function SubChart() {
  return (
    <ChartSvg width={1443} height={296} viewBox="0 800 1443 296">
      <HLine y={819} color="#700000" />
      <HLine y={945} color="#700000" dashed />
      <HLine y={1070} color="#700000" dashed />
      <HLine y={1094} color="#b00000" />
      <polyline points={subLine(kMagentaA, kMagentaB)} fill="none" stroke="#ff00ff" />
      <polyline points={subLine(kWhiteA, kWhiteB)} fill="none" stroke="#f0f0f0" />
      <polyline points={subLine(kYellowA, kYellowB)} fill="none" stroke="#ffff00" />
    </ChartSvg>
  );
}

export default function App() {
  return (
    <Root>
      <GlobalStyle />
      <ChartColumn>
        <TopBar>
          <HideOrder>隐藏下单</HideOrder>
        </TopBar>
        <MainPane>
          <MainChart />
        </MainPane>
        <SubPane>
          <SubChart />
        </SubPane>
      </ChartColumn>
      <Panel>
        <Header>
          <NavArrow viewBox="0 0 18 30">
            <polyline points="16,2 3,15 16,28" fill="none" stroke="#8b0000" strokeWidth="3" />
          </NavArrow>
          <TitleBlock>
            <Title>
              <Marker>M</Marker>
              CMX金04
            </Title>
            <Symbol>GC2504</Symbol>
            <Session>06:00-05:00</Session>
          </TitleBlock>
          <NavArrow viewBox="0 0 18 30">
            <polyline points="2,2 15,15 2,28" fill="none" stroke="#8b0000" strokeWidth="3" />
          </NavArrow>
        </Header>
        <QuoteRow $height={31}>
          <QuoteLabel>卖出</QuoteLabel>
          <QuotePrice>3035.3</QuotePrice>
          <QuoteSize>1</QuoteSize>
        </QuoteRow>
        <PressureBar>
          <PressureFill $color="#ff3333" $share={66.5} />
          <PressureFill $color="#00d000" $share={33.5} />
        </PressureBar>
        <QuoteRow $height={30}>
          <QuoteLabel>买入</QuoteLabel>
          <QuotePrice>3035.2</QuotePrice>
          <QuoteSize>2</QuoteSize>
        </QuoteRow>
        <Stats>
          {stats.map(([l1, v1, c1, l2, v2, c2]) => (
            <StatRow key={l1}>
              <StatLabel>{l1}</StatLabel>
              <StatValue $color={c1}>{v1}</StatValue>
              <StatLabelRight>{l2}</StatLabelRight>
              <StatValue $color={c2}>{v2}</StatValue>
            </StatRow>
          ))}
        </Stats>
        <DepthHead>
          <DepthTitle>多档行情</DepthTitle>
          <HeadIcon width="12" height="14" viewBox="0 0 12 14" fill="none" stroke="#a0a0a0" strokeWidth="1.3">
            <polyline points="1,1 6,5 11,1" />
            <polyline points="1,5 6,9 11,5" />
            <polyline points="1,9 6,13 11,9" />
          </HeadIcon>
          <HeadUp width="15" height="9" viewBox="0 0 15 9" fill="none" stroke="#3a80e0" strokeWidth="1.5">
            <polyline points="1,8 7.5,1.5 14,8" />
          </HeadUp>
        </DepthHead>
        <DepthBlock>
          {asks.map(([label, price, vol, total]) => (
            <DepthRow key={label} $color="#00dc00">
              <span>{label}</span>
              <span>{price}</span>
              <DepthVolume>{vol}</DepthVolume>
              <DepthVolume>{total}</DepthVolume>
            </DepthRow>
          ))}
        </DepthBlock>
        <DepthBlock>
          {bids.map(([label, price, vol, total]) => (
            <DepthRow key={label} $color="#f03030">
              <span>{label}</span>
              <span>{price}</span>
              <DepthVolume>{vol}</DepthVolume>
              <DepthVolume>{total}</DepthVolume>
            </DepthRow>
          ))}
        </DepthBlock>
        <Trades>
          <TradeHead>
            <span>时间</span>
            <span>价格</span>
            <span>手数</span>
            <span>开平</span>
          </TradeHead>
          {trades.map(([time, price, qty, up, side], i) => (
            <TradeRow key={i}>
              <TradeTime $latest={i === trades.length - 1}>{time}</TradeTime>
              <TradePrice>{price}</TradePrice>
              <TradeQty $color={up ? RED : GREEN}>{qty}</TradeQty>
              <TradeSide>{side}</TradeSide>
            </TradeRow>
          ))}
        </Trades>
        <ScrollMark />
      </Panel>
    </Root>
  );
}
